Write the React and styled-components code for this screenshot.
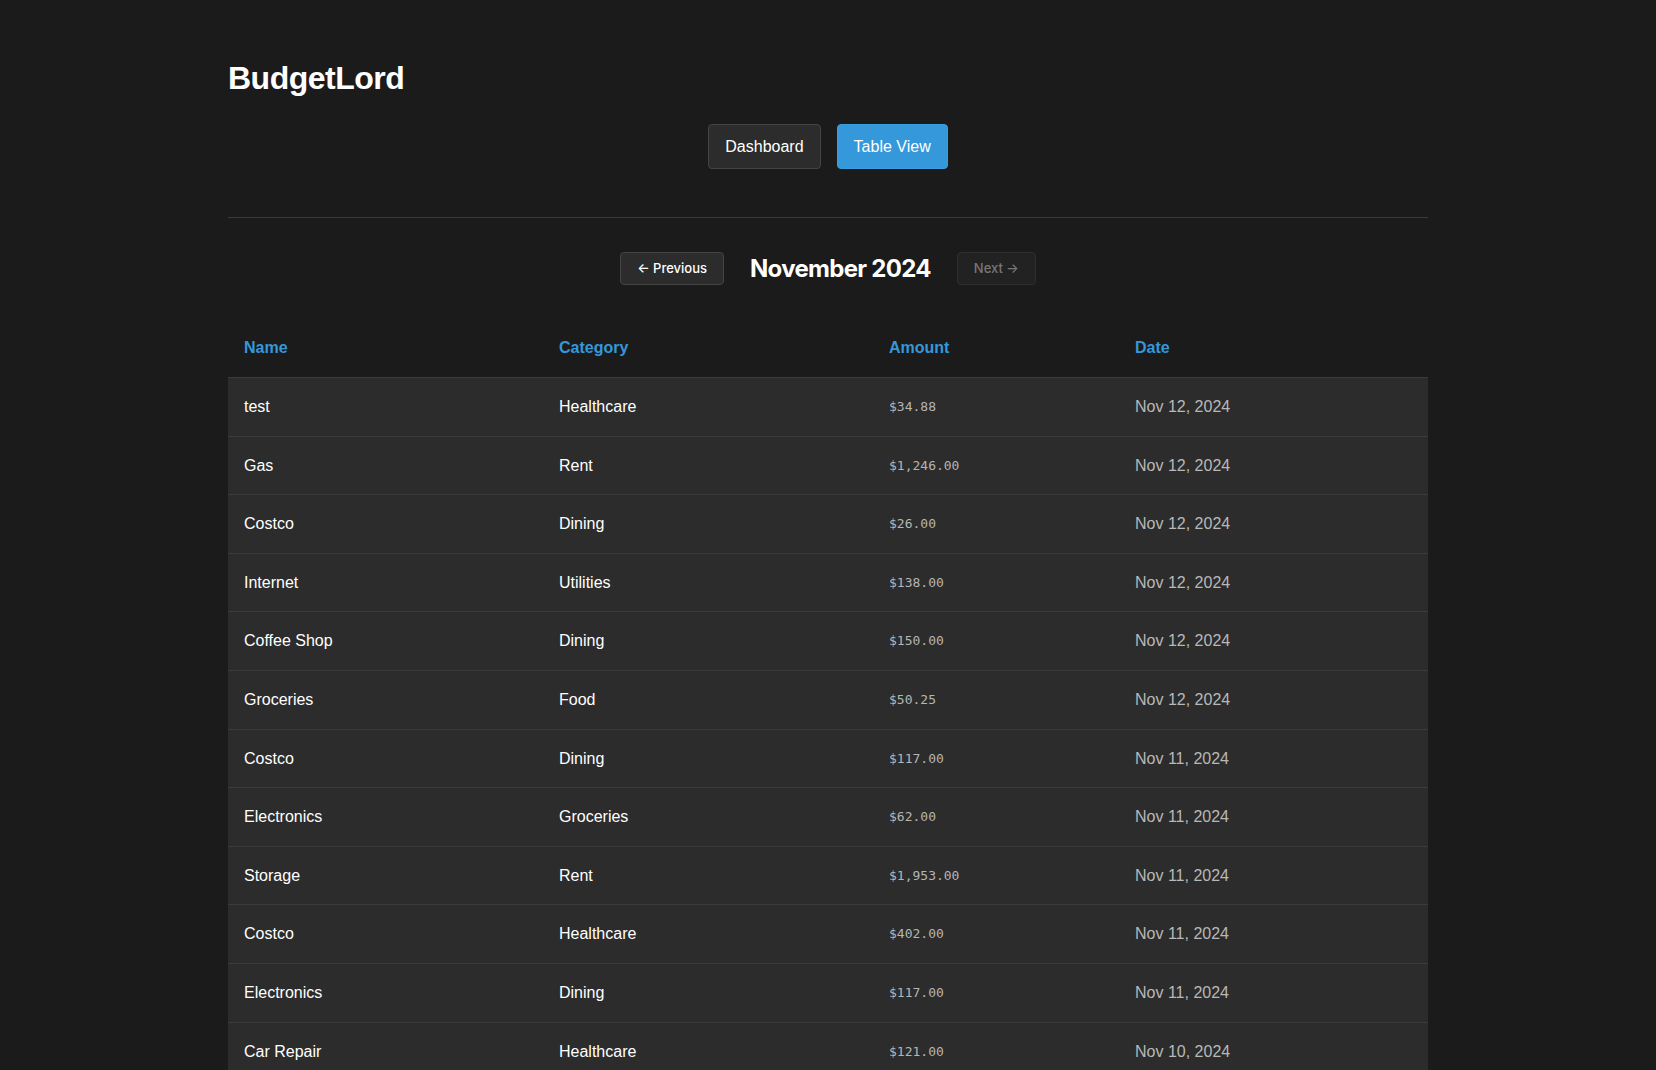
import React from "react"
import styled, { createGlobalStyle } from "styled-components"

const GlobalStyle = createGlobalStyle`
  body {
    margin: 0;
    background: #1b1b1b;
    color: #fff;
    font-family: "Liberation Sans", Arial, sans-serif;
  }
`

const transactions = [
  { name: "test", category: "Healthcare", amount: 34.88, date: "Nov 12, 2024" },
  { name: "Gas", category: "Rent", amount: 1246, date: "Nov 12, 2024" },
  { name: "Costco", category: "Dining", amount: 26, date: "Nov 12, 2024" },
  { name: "Internet", category: "Utilities", amount: 138, date: "Nov 12, 2024" },
  { name: "Coffee Shop", category: "Dining", amount: 150, date: "Nov 12, 2024" },
  { name: "Groceries", category: "Food", amount: 50.25, date: "Nov 12, 2024" },
  { name: "Costco", category: "Dining", amount: 117, date: "Nov 11, 2024" },
  { name: "Electronics", category: "Groceries", amount: 62, date: "Nov 11, 2024" },
  { name: "Storage", category: "Rent", amount: 1953, date: "Nov 11, 2024" },
  { name: "Costco", category: "Healthcare", amount: 402, date: "Nov 11, 2024" },
  { name: "Electronics", category: "Dining", amount: 117, date: "Nov 11, 2024" },
  { name: "Car Repair", category: "Healthcare", amount: 121, date: "Nov 10, 2024" },
]

const formatAmount = (n) =>
  "$" + n.toLocaleString("en-US", { minimumFractionDigits: 2, maximumFractionDigits: 2 })

const App = () => {
  return (
    <>
      <GlobalStyle />
      <Page>
        <Header>
          <Title>BudgetLord</Title>
          <Nav>
            <NavButton>Dashboard</NavButton>
            <NavButton active>Table View</NavButton>
          </Nav>
        </Header>

        <Pager>
          <PageButton>← Previous</PageButton>
          <Month>November 2024</Month>
          <PageButton disabled>Next →</PageButton>
        </Pager>

        <Table>
          <colgroup>
            <col style={{ width: 315 }} />
            <col style={{ width: 330 }} />
            <col style={{ width: 246 }} />
            <col style={{ width: 309 }} />
          </colgroup>
          <thead>
            <tr>
              <Th>Name</Th>
              <Th>Category</Th>
              <Th>Amount</Th>
              <Th>Date</Th>
            </tr>
          </thead>
          <tbody>
            {transactions.map((t, i) => (
              <Row key={i}>
                <Cell>{t.name}</Cell>
                <Cell>{t.category}</Cell>
                <AmountCell>{formatAmount(t.amount)}</AmountCell>
                <DateCell>{t.date}</DateCell>
              </Row>
            ))}
          </tbody>
        </Table>
      </Page>
    </>
  )
}

export default App

const Page = styled.div`
  max-width: 1200px;
  margin: 0 auto;
  padding-top: 60px;
`

const Header = styled.header`
  padding-bottom: 48px;
  border-bottom: 1px solid #3a3a3a;
`

const Title = styled.h1`
  margin: 0;
  font-size: 32px;
  font-weight: 700;
  letter-spacing: -0.5px;
  line-height: 37px;
`

const Nav = styled.nav`
  display: flex;
  justify-content: center;
  gap: 16px;
  margin-top: 27px;
`

const NavButton = styled.button`
  font-family: "Liberation Sans", Arial, sans-serif;
  font-size: 16px;
  line-height: 19px;
  padding: 12px 16px;
  border-radius: 4px;
  border: 1px solid ${(p) => (p.active ? "#3a9ee0" : "#444")};
  background: ${(p) => (p.active ? "#3498db" : "#2c2c2c")};
  color: #fff;
  cursor: pointer;
`

const Pager = styled.div`
  display: flex;
  justify-content: center;
  align-items: center;
  gap: 26px;
  margin-top: 34px;
`

const PageButton = styled.button`
  font-family: Inter, "Liberation Sans", sans-serif;
  font-size: 13px;
  font-weight: 500;
  line-height: 17px;
  padding: 7px 16px;
  border-radius: 4px;
  border: 1px solid ${(p) => (p.disabled ? "#2e2e2e" : "#444")};
  background: ${(p) => (p.disabled ? "#222" : "#2c2c2c")};
  color: ${(p) => (p.disabled ? "#777" : "#fff")};
`

const Month = styled.h2`
  margin: 0;
  font-family: Inter, "Liberation Sans", sans-serif;
  font-size: 24px;
  font-weight: 700;
  letter-spacing: -0.7px;
`

const Table = styled.table`
  width: 100%;
  margin-top: 34px;
  border-collapse: collapse;
  table-layout: fixed;
`

const Th = styled.th`
  text-align: left;
  padding: 20px 16px;
  font-size: 16px;
  line-height: 18px;
  font-weight: 700;
  color: #3498db;
  border-bottom: 1px solid #3a3a3a;
`

const Row = styled.tr`
  background: #2c2c2c;
  border-bottom: 1px solid #3a3a3a;
`

const Cell = styled.td`
  padding: 20px 16px;
  font-size: 16px;
  line-height: 17.6px;
  color: #fff;
`

const AmountCell = styled(Cell)`
  font-family: "DejaVu Sans Mono", "Liberation Mono", monospace;
  font-size: 13px;
  color: #b5b5b5;
`

const DateCell = styled(Cell)`
  color: #b8b8b8;
`
